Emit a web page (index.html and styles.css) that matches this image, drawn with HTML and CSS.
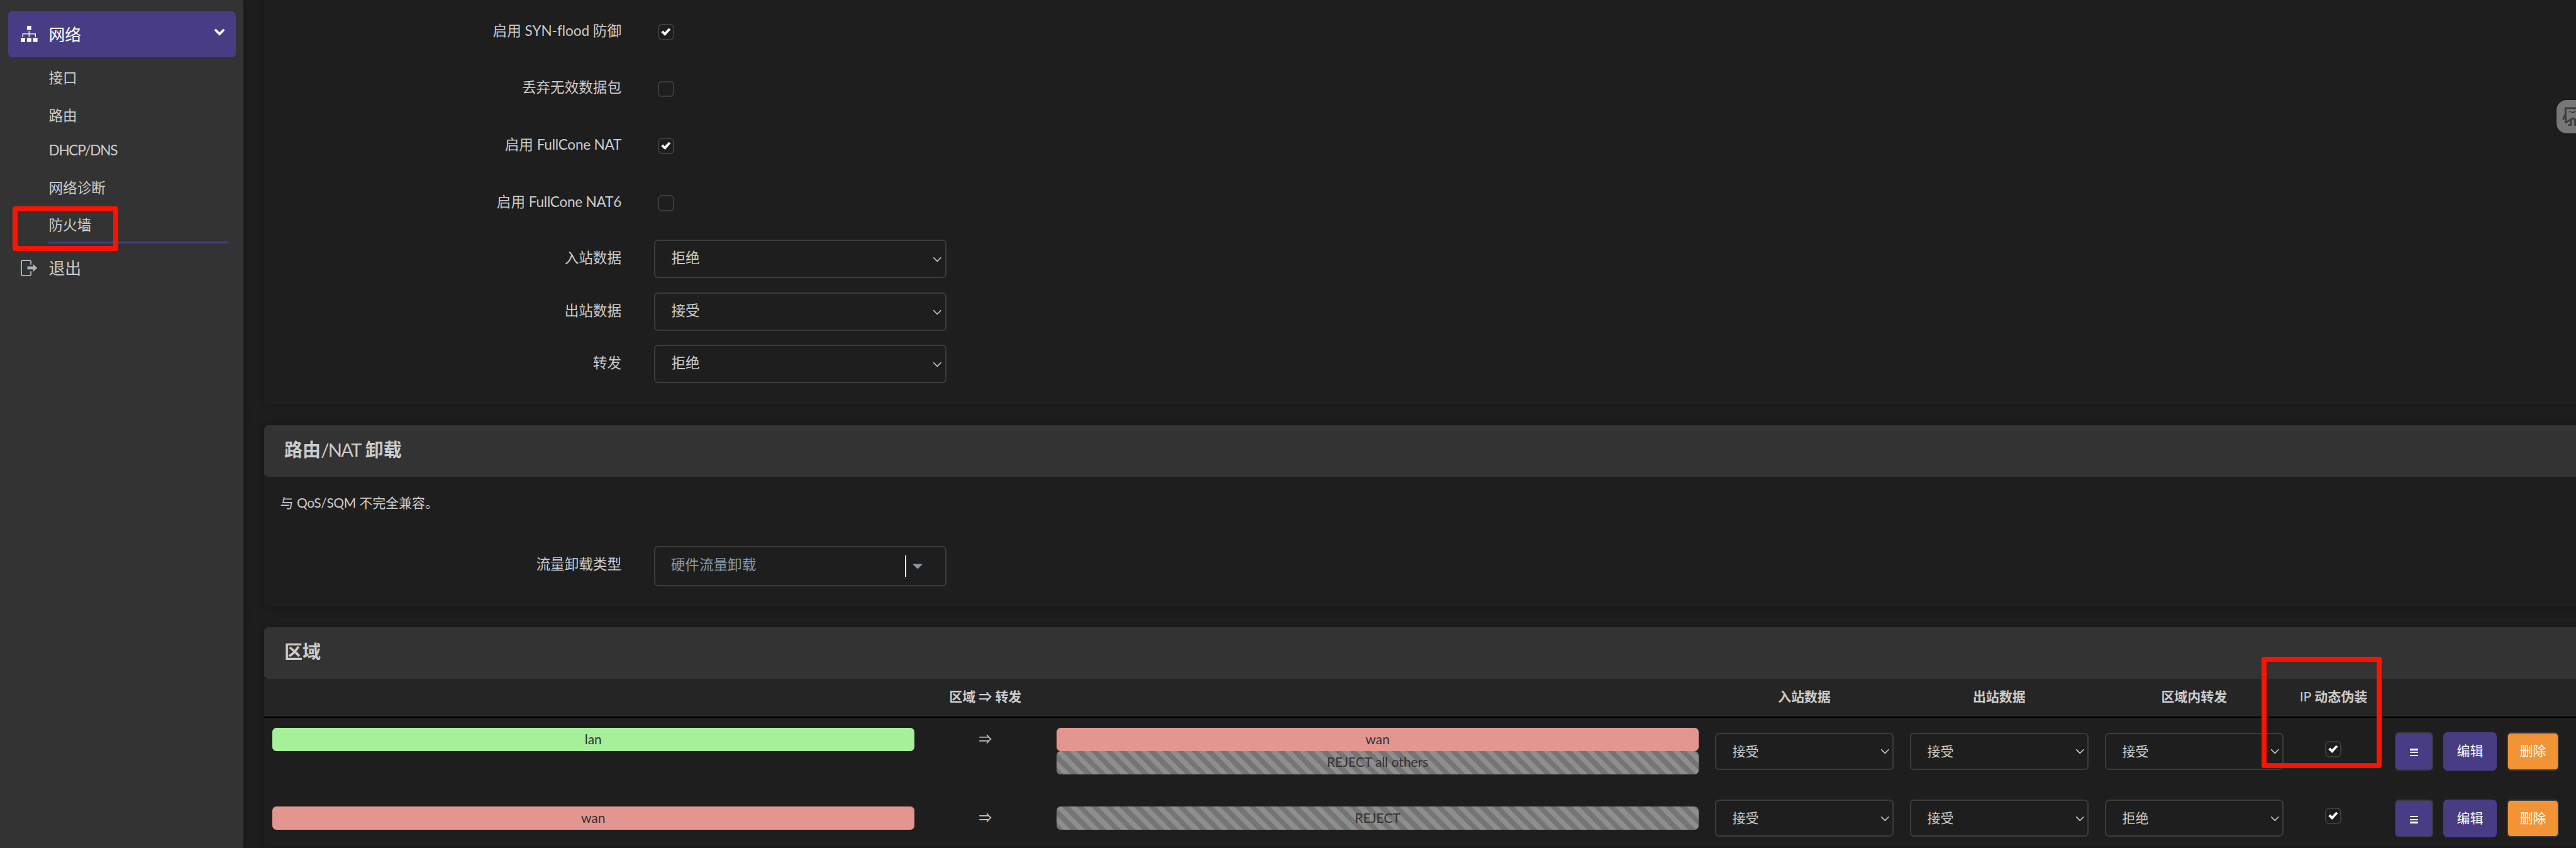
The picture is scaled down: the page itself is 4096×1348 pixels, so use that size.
FILE: index.html
```html
<!DOCTYPE html>
<html lang="zh-CN">
<head>
<meta charset="utf-8">
<title>防火墙</title>
<link rel="stylesheet" href="styles.css">
</head>
<body>
<svg class="defs" aria-hidden="true">
  <symbol id="tick" viewBox="0 0 22 18"><path d="M1 9.5 5 6l3.5 4L17 1l4 2.500L9 17z"/></symbol>
  <symbol id="arrow" viewBox="0 0 18 11"><path d="M1.5 1.5 9 9l7.500-7.500" fill="none" stroke="currentColor" stroke-width="2"/></symbol>
</svg>
<div class="app">
  <nav class="sidebar">
    <a class="menu active">
      <svg class="menu-icon" viewBox="0 0 33 32" fill="#fff"><path d="M12.300 0h8.400v8h-8.400zM0 24h8.700v8H0zM12.200 24h8.600v8h-8.600zM24.300 24H33v8h-8.700z"/><path d="M3.900 22v-6h25v6M16.500 10v12" fill="none" stroke="#fff" stroke-width="1.700"/></svg>
      <span>网络</span>
      <svg class="menu-caret" viewBox="0 0 20 13"><path d="M2.500 2.500 10 10l7.500-7.500" fill="none" stroke="#fff" stroke-width="4.600" stroke-linecap="round"/></svg>
    </a>
    <ul class="submenu">
      <li>接口</li>
      <li>路由</li>
      <li class="latin-row">DHCP/DNS</li>
      <li class="diag">网络诊断</li>
      <li class="current">防火墙<i class="mark mark-menu"></i></li>
    </ul>
    <a class="menu logout">
      <svg class="menu-icon" viewBox="0 0 33 32"><path d="M20 9.500V3.500Q20 1.200 17.700 1.200H3.500Q1.200 1.200 1.200 3.500v25q0 2.300 2.300 2.300h14.200q2.300 0 2.300-2.300v-6" fill="none" stroke="#adb5bd" stroke-width="2.400"/><path d="M13 13.100h11.300V8.300L32.500 16l-8.200 7.700v-4.800H13z" fill="#adb5bd"/></svg>
      <span>退出</span>
    </a>
  </nav>

  <main class="main">
    <section class="card general">
      <div class="field check"><label>启用 <span class="syn">SYN-flood</span> 防御</label><span class="box"><svg><use href="#tick"/></svg></span></div>
      <div class="field check"><label>丢弃无效数据包</label><span class="box"></span></div>
      <div class="field check"><label>启用 <span class="cone">FullCone NAT</span></label><span class="box"><svg><use href="#tick"/></svg></span></div>
      <div class="field check last"><label>启用 <span class="cone">FullCone NAT6</span></label><span class="box"></span></div>
      <div class="field"><label>入站数据</label><div class="select">拒绝<svg><use href="#arrow"/></svg></div></div>
      <div class="field"><label>出站数据</label><div class="select">接受<svg><use href="#arrow"/></svg></div></div>
      <div class="field"><label>转发</label><div class="select">拒绝<svg><use href="#arrow"/></svg></div></div>
    </section>

    <section class="card offload">
      <h3>路由<span class="head-latin">/NAT</span> 卸载</h3>
      <p>与 <span class="qos">QoS/SQM</span> 不完全兼容。</p>
      <div class="field"><label>流量卸载类型</label><div class="dropdown"><span>硬件流量卸载</span><i class="divider"></i><i class="triangle"></i></div></div>
    </section>

    <section class="card zones">
      <h3>区域</h3>
      <div class="row head">
        <div class="span3">区域 ⇒ 转发</div><div>入站数据</div><div>出站数据</div><div>区域内转发</div>
        <div class="masq"><span class="ip">IP</span> 动态伪装<i class="mark mark-masq"></i></div>
      </div>
      <div class="row first">
        <div class="zone lan">lan</div><div class="to">⇒</div>
        <div class="dest"><div class="zone wan">wan</div><div class="zone reject others">REJECT all others</div></div>
        <div class="select">接受<svg><use href="#arrow"/></svg></div>
        <div class="select">接受<svg><use href="#arrow"/></svg></div>
        <div class="select">接受<svg><use href="#arrow"/></svg></div>
        <span class="box"><svg><use href="#tick"/></svg></span>
        <div class="actions"><button class="btn drag"><i></i><i></i><i></i></button><button class="btn edit">编辑</button><button class="btn remove">删除</button></div>
      </div>
      <div class="row second">
        <div class="zone wan">wan</div><div class="to">⇒</div>
        <div class="dest"><div class="zone reject">REJECT</div></div>
        <div class="select">接受<svg><use href="#arrow"/></svg></div>
        <div class="select">接受<svg><use href="#arrow"/></svg></div>
        <div class="select">拒绝<svg><use href="#arrow"/></svg></div>
        <span class="box"><svg><use href="#tick"/></svg></span>
        <div class="actions"><button class="btn drag"><i></i><i></i><i></i></button><button class="btn edit">编辑</button><button class="btn remove">删除</button></div>
      </div>
    </section>
  </main>
  <aside class="helper">
    <svg viewBox="0 0 38 66" fill="none" stroke="#3b3b3b" stroke-width="3.400" stroke-linecap="round" stroke-linejoin="round"><path d="M42 16H17.500l.8 28.500L30 37q3-2 6 1l4 3M17 29q-2 4-3.500 8.500M28.500 40v9H24M36.500 40v9H42"/><path d="M26.500 23h.1M36.700 23h.1" stroke-width="3"/><path d="M30 24q2 1.500 4 0" stroke-width="2.500"/></svg>
  </aside>
</div>
</body>
</html>
```
FILE: styles.css
```css
/* 1rem is ten design pixels */
html { font-size: 8.0725px; }
* { box-sizing: border-box; }
body {
  margin: 0;
  background: #1e1e1e;
  color: #ccc;
  font-family: Lato, "Noto Sans CJK SC", sans-serif;
  font-size: 2.8rem;
  overflow: hidden;
}
.defs { display: none; }
.app { display: flex; position: relative; width: 100vw; height: 100vh; overflow: hidden; }

/* sidebar */
.sidebar {
  flex: none;
  width: 48rem;
  padding: 2.18rem 1.6rem 0;
  background: #333;
  box-shadow: 0 0 2rem rgba(0, 0, 0, .3);
  z-index: 1;
}
.menu { display: flex; align-items: center; height: 9.07rem; padding: 0 2.2rem 0 2.5rem; font-size: 3.2rem; line-height: 9.07rem; }
.menu.active { background: #483d85; color: #fff; border-radius: .8rem; }
.menu span { margin-top: .3rem; }
.menu-icon { width: 3.3rem; height: 3.2rem; margin-right: 2.2rem; }
.menu-caret { width: 2rem; height: 1.3rem; margin: -.7rem 0 0 auto; }
.submenu { list-style: none; margin: 0 1.6rem 0 8rem; padding: .4rem 0 0; }
.submenu li { height: 7.45rem; line-height: 7.45rem; }
.submenu .latin-row { height: 7rem; line-height: 6.3rem; letter-spacing: -.16rem; }
.submenu .diag { height: 6.85rem; line-height: 6.85rem; }
.submenu .current { position: relative; height: 7.6rem; line-height: 7.85rem; border-bottom: 3px solid #483d85; }
.logout { height: 9.5rem; line-height: 9.5rem; }

/* red highlight frames */
.mark { position: absolute; border: 1rem solid #ff1200; border-radius: .5rem; z-index: 3; }
.mark-menu { left: -7.1rem; top: .3rem; width: 20.8rem; height: 8.75rem; }
.mark-masq { left: -4.3rem; top: -4.4rem; width: 23.6rem; height: 22rem; }

/* cards */
.main { flex: 1; min-width: 0; padding-left: 4rem; }
.card { width: 470rem; border-radius: .8rem; background: #1e1e1e; box-shadow: 0 0 2rem rgba(0, 0, 0, .3); }
.card h3 { margin: 0; height: 10.2rem; padding-left: 4rem; background: #333; border-radius: .8rem; font-size: 3.6rem; line-height: 9.7rem; font-weight: 700; }
.head-latin { font-weight: 400; letter-spacing: -.2rem; }
.general { height: 79.7rem; padding-top: .7rem; }
.offload { margin-top: 4rem; height: 35.8rem; }
.zones { margin-top: 4rem; height: 43.3rem; }
.offload p { margin: 0; height: 10rem; padding-left: 3.2rem; font-size: 2.6rem; line-height: 10.2rem; }
.qos { letter-spacing: -.05rem; }
.offload .field { height: 7.9rem; margin-top: 3.6rem; }

/* form rows */
.field { display: flex; height: 7.6rem; margin-bottom: 2.75rem; }
.field label { width: 70.4rem; margin-right: 6.4rem; text-align: right; line-height: 7.3rem; }
.field.check { height: 11.24rem; margin: 0; align-items: flex-start; }
.field.last { margin-bottom: 1.54rem; }
.check label { margin-right: 7.2rem; line-height: 10.6rem; }
.check .box { margin-top: 4rem; }
.syn { letter-spacing: -.01rem; }
.cone { letter-spacing: -.03rem; }
.box { display: flex; align-items: center; justify-content: center; width: 3.2rem; height: 3.2rem; border: 2px solid #3c3c3c; border-radius: .8rem; }
.box svg { width: 2.2rem; height: 1.7rem; fill: #fff; }
.select { display: flex; justify-content: space-between; width: 57.6rem; height: 7.6rem; padding: 0 .6rem 0 3.2rem; border: 2px solid #3c3c3c; border-radius: .8rem; line-height: 6.8rem; }
.select svg { width: 1.8rem; height: 1.1rem; margin-top: 3.1rem; }
.dropdown { display: flex; width: 57.6rem; height: 7.9rem; padding-left: 3.1rem; border: 2px solid #3c3c3c; border-radius: .8rem; color: #8898aa; line-height: 7rem; }
.divider { width: 2px; height: 4.3rem; margin: 1.6rem 1.3rem 0 auto; background: #eee; }
.triangle { width: 2rem; height: 1rem; margin: 3.3rem 4.4rem 0 0; background: #8898aa; clip-path: polygon(0 0, 100% 0, 50% 100%); }

/* zone table */
.row {
  display: grid;
  grid-template-columns: 126.5rem 28rem 126.5rem 3.2rem 35.2rem 3.2rem 35.2rem 3.2rem 35.2rem 8.2rem 3.2rem 10.6rem 34rem;
  align-items: start;
  padding-left: 1.6rem;
  font-size: 2.6rem;
}
.row > :nth-child(4) { grid-column: 5; }
.row > :nth-child(5) { grid-column: 7; }
.row > :nth-child(6) { grid-column: 9; }
.row > :nth-child(7) { grid-column: 11; }
.row > :nth-child(8) { grid-column: 13; }
.head { height: 7.6rem; background: #252525; border-bottom: 2px solid #000; font-weight: 700; text-align: center; line-height: 7rem; }
.row.head > :nth-child(1) { grid-column: 1 / 4; }
.row.head > :nth-child(2) { grid-column: 5; }
.row.head > :nth-child(3) { grid-column: 7; }
.row.head > :nth-child(4) { grid-column: 9; }
.row.head > .masq { grid-column: 10 / 13; position: relative; width: 19.7rem; white-space: nowrap; }
.first { height: 14.3rem; padding-top: 2rem; }
.second { height: 11.2rem; padding-top: 3.2rem; }
.ip { font-weight: 400; }
.zone { height: 4.6rem; border-radius: .8rem; color: #333; text-align: center; line-height: 4.4rem; }
.others { line-height: 4.2rem; }
.lan { background: #a5f099; }
.wan { background: #e39590; }
.reject { background: repeating-linear-gradient(45deg, #757575, #757575 1rem, #8e8e8e 1rem, #8e8e8e 2rem); }
.to { text-align: center; line-height: 4.2rem; }
.row .select { width: 35.2rem; height: 7.3rem; margin-top: 1rem; line-height: 6.6rem; }
.row .select svg { margin-top: 2.9rem; }
.row .box { margin-top: 2.6rem; }
.actions { display: flex; gap: 2rem; margin-top: .9rem; }
.row.second .select { margin-top: -1.3rem; }
.row.second .box { margin-top: .3rem; }
.row.second .actions { margin-top: -1.4rem; }
.btn { height: 7.5rem; padding: 0; border: 2px solid #3c3c3c; border-radius: .8rem; background: #483d85; color: #fff; font: inherit; line-height: 6.6rem; text-align: center; display: flex; justify-content: center; }
.drag { flex-direction: column; justify-content: flex-start; align-items: center; gap: .3rem; width: 7.5rem; padding-top: 3rem; }
.drag i { width: 1.6rem; height: .3rem; background: #fff; }
.edit { width: 10.5rem; border-color: #483d85; }
.remove { width: 10.3rem; background: #f29335; }

/* floating helper on the window edge */
.helper { position: absolute; right: 0; top: 19.7rem; width: 3.8rem; height: 6.6rem; background: #777; border-radius: 2rem 0 0 2rem; box-shadow: 0 0 .4rem rgba(0, 0, 0, .4); z-index: 2; }
.helper svg { display: block; width: 3.8rem; height: 6.6rem; }
```
